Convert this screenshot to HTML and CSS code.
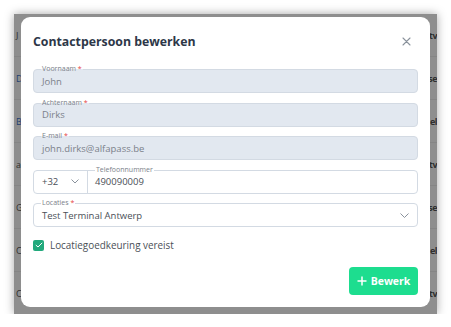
FILE: index.html
```html
<!DOCTYPE html>
<html lang="nl">
<head>
    <meta charset="UTF-8" />
    <title>Contactpersoon bewerken</title>
    <link rel="stylesheet" href="styles.css">
</head>
<body>
    <div class="screen">
        <div class="table">
            <div class="row"><span class="cell-left">J</span><span class="cell-right">tv</span></div>
            <div class="row"><span class="cell-left blue">D</span><span class="cell-right">se</span></div>
            <div class="row"><span class="cell-left blue">B</span><span class="cell-right">el</span></div>
            <div class="row"><span class="cell-left">a</span><span class="cell-right">tv</span></div>
            <div class="row"><span class="cell-left">G</span><span class="cell-right">se</span></div>
            <div class="row"><span class="cell-left">C</span><span class="cell-right">el</span></div>
            <div class="row"><span class="cell-left">C</span><span class="cell-right">tv</span></div>
        </div>

        <div class="modal">
            <div class="modal-header">
                <h2>Contactpersoon bewerken</h2>
                <button class="close" aria-label="Sluiten">
                    <svg width="9" height="9" viewBox="0 0 9 9"><path d="M1 1L8 8M8 1L1 8" stroke="#8a929c" stroke-width="1.1" stroke-linecap="round"/></svg>
                </button>
            </div>

            <div class="form">
                <div class="field disabled">
                    <label>Voornaam <span class="req">*</span></label>
                    <span class="value">John</span>
                </div>
                <div class="field disabled">
                    <label>Achternaam <span class="req">*</span></label>
                    <span class="value">Dirks</span>
                </div>
                <div class="field disabled">
                    <label>E-mail <span class="req">*</span></label>
                    <span class="value">john.dirks@alfapass.be</span>
                </div>
                <div class="field phone">
                    <div class="prefix">
                        <span class="value">+32</span>
                        <svg width="8" height="5" viewBox="0 0 8 5"><path d="M0.5 0.5L4 4L7.5 0.5" fill="none" stroke="#8a929c" stroke-width="1"/></svg>
                    </div>
                    <div class="number">
                        <label>Telefoonnummer</label>
                        <span class="value">490090009</span>
                    </div>
                </div>
                <div class="field select">
                    <label>Locaties <span class="req">*</span></label>
                    <span class="value">Test Terminal Antwerp</span>
                    <svg width="9" height="5" viewBox="0 0 9 5"><path d="M0.5 0.5L4.5 4.5L8.5 0.5" fill="none" stroke="#8a929c" stroke-width="1"/></svg>
                </div>
            </div>

            <div class="check">
                <span class="box">
                    <svg width="8" height="6" viewBox="0 0 8 6"><path d="M0.8 3L3 5L7.2 0.8" fill="none" stroke="#fff" stroke-width="1"/></svg>
                </span>
                <span>Locatiegoedkeuring vereist</span>
            </div>

            <div class="footer">
                <button class="btn-save">
                    <svg width="10" height="10" viewBox="0 0 10 10"><path d="M5 0.5V9.5M0.5 5H9.5" stroke="#fff" stroke-width="1.5"/></svg>
                    Bewerk
                </button>
            </div>
        </div>
    </div>
</body>
</html>
```

FILE: styles.css
```css
body {
    margin: 0;
    background: #ffffff;
    font-family: "Open Sans", "Noto Sans", sans-serif;
}
.screen {
    position: relative;
    margin: 14px 0 0 14px;
    width: 423px;
    height: 300px;
    background: #8e8e8e;
    box-shadow: 0 0 9px rgba(0, 0, 0, 0.35);
    overflow: hidden;
}
.table {
    display: flex;
    flex-direction: column;
}
.row {
    display: flex;
    justify-content: space-between;
    align-items: center;
    height: 42px;
    border-bottom: 1px solid #858585;
    font-size: 9px;
    color: #2e2e2e;
}
.cell-left {
    padding-left: 2px;
}
.cell-left.blue {
    color: #1f3f6e;
}
.cell-right {
    font-weight: 700;
    white-space: nowrap;
    letter-spacing: -0.5px;
}
.modal {
    position: absolute;
    left: 7px;
    top: 3px;
    width: 409px;
    height: 290px;
    box-sizing: border-box;
    padding: 0 12px 12px;
    background: #ffffff;
    border-radius: 9px;
    display: flex;
    flex-direction: column;
}
.modal-header {
    height: 48px;
    display: flex;
    align-items: center;
    justify-content: space-between;
}
.modal-header h2 {
    margin: 0;
    font-size: 12.3px;
    font-weight: 700;
    color: #2d3748;
}
.close {
    border: none;
    background: none;
    padding: 0;
    margin-right: 7px;
    display: flex;
}
.form {
    margin-top: 4px;
    display: flex;
    flex-direction: column;
    gap: 9.6px;
}
.field {
    position: relative;
    height: 24px;
    box-sizing: border-box;
    border: 1px solid #d3dae3;
    border-radius: 4px;
    display: flex;
    align-items: center;
    padding: 0 8px;
    font-size: 9.5px;
    color: #4a4f57;
}
.field.disabled {
    background: #e2e8f0;
    color: #7b818a;
}
.field label {
    position: absolute;
    left: 7px;
    top: -5px;
    padding: 0 1px;
    font-size: 7px;
    line-height: 8px;
    color: #7b818a;
    background: #ffffff;
}
.field.disabled label {
    background: linear-gradient(#ffffff 50%, #e2e8f0 50%);
}
.req {
    color: #e53e3e;
}
.field.phone {
    padding: 0;
}
.prefix {
    width: 54px;
    height: 100%;
    box-sizing: border-box;
    border-right: 1px solid #d3dae3;
    display: flex;
    align-items: center;
    justify-content: space-between;
    padding: 0 8px 0 8px;
}
.number {
    position: relative;
    flex: 1;
    height: 100%;
    display: flex;
    align-items: center;
    padding-left: 7px;
}
.field.select {
    justify-content: space-between;
}
.check {
    margin-top: 11px;
    display: flex;
    align-items: center;
    gap: 6px;
    font-size: 9.9px;
    color: #4a4f57;
}
.box {
    width: 11px;
    height: 11px;
    border-radius: 2px;
    background: #22a97c;
    display: flex;
    align-items: center;
    justify-content: center;
}
.footer {
    margin-top: auto;
    display: flex;
    justify-content: flex-end;
}
.btn-save {
    width: 69px;
    height: 28px;
    border: none;
    border-radius: 4px;
    background: #1ddd8f;
    color: #ffffff;
    font-family: inherit;
    font-size: 10.5px;
    font-weight: 700;
    display: flex;
    align-items: center;
    justify-content: center;
    gap: 4px;
    padding: 0;
}
```
